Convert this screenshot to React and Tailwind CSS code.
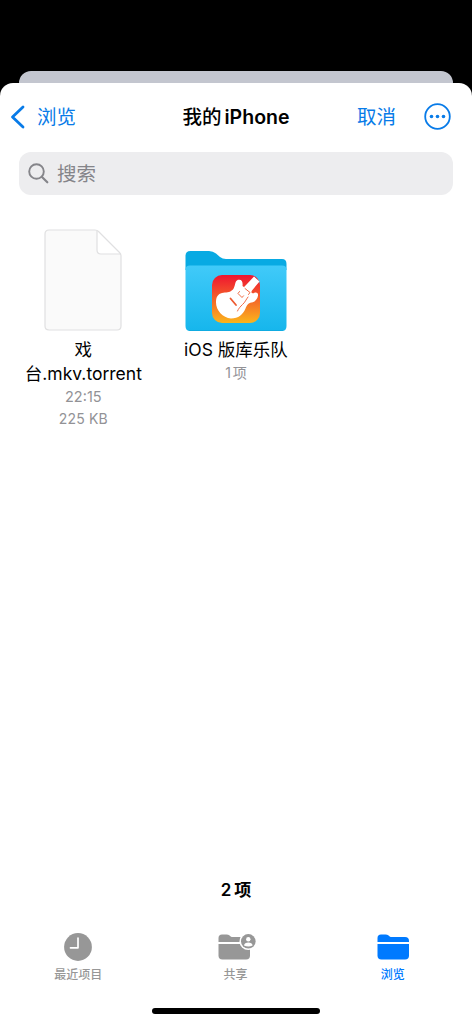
import React, { useState } from 'react';

const tabs = [
  { id: 'recents', label: '最近项目' },
  { id: 'shared', label: '共享' },
  { id: 'browse', label: '浏览' },
];

const FileIcon = () => (
  <svg width="78" height="102" viewBox="0 0 78 102" fill="none">
    <path
      d="M5 1H52.5L77 25.500V97Q77 101 73 101H5Q1 101 1 97V5Q1 1 5 1Z"
      fill="#fafafa"
    />
    <path d="M53 1L77 25H57Q53 25 53 21Z" fill="#fff" />
    <path
      d="M5 1H51Q53 1 54.500 2.500L75.500 23.500Q77 25 77 27V97Q77 101 73 101H5Q1 101 1 97V5Q1 1 5 1Z"
      stroke="#e0e0e1"
      strokeWidth="1.200"
    />
    <path d="M53 1.500V21Q53 25 57 25H76.500" stroke="#e0e0e1" strokeWidth="1.200" />
  </svg>
);

const GarageBandFolder = () => (
  <svg width="102" height="80" viewBox="0 0 102 80" fill="none">
    <defs>
      <linearGradient id="front" x1="0" y1="14" x2="0" y2="80" gradientUnits="userSpaceOnUse">
        <stop stopColor="#41caf9" />
        <stop offset="1" stopColor="#16b6ec" />
      </linearGradient>
      <linearGradient id="band" x1="0" y1="24" x2="0" y2="72" gradientUnits="userSpaceOnUse">
        <stop stopColor="#ef1430" />
        <stop offset="0.500" stopColor="#f4642a" />
        <stop offset="1" stopColor="#fbb51c" />
      </linearGradient>
    </defs>
    <path
      d="M0.500 5Q0.500 0 5.500 0H24Q28 0 31 2.500L35 6Q37.500 8 41 8H97Q101.500 8 101.500 13V19H0.500Z"
      fill="#08aae3"
    />
    <path
      d="M5 14.500H97Q101.500 14.500 101.500 18.500V75Q101.500 80 97 80H5Q0.500 80 0.500 75V18.500Q0.500 14.500 5 14.500Z"
      fill="url(#front)"
    />
    <path d="M4 79.500H98" stroke="#0ba4da" strokeWidth="0.600" />
    <rect x="27" y="24" width="48" height="48" rx="10" fill="url(#band)" />
    {/* guitar body */}
    <path
      d="M31 50.500C31 46 33 43 37 42C41 41.200 44.500 42 48 38.500C50.500 35.500 49.500 30 53 28.800C57 28 58 31 57.500 35L68 42.500C70.500 40.500 73.500 41.500 73 44.500C72.500 48 70 51 66.500 51.500C63 52 62 54 60.500 57.500C58 63.500 53.500 67.500 46 67.500C37.500 67 30.500 59 31 50.500Z"
      fill="#fff"
    />
    {/* neck and headstock */}
    <path d="M55 40L61.500 33.500L69 25.500L74.500 30.500L67 39.500L64 46L59 48Z" fill="#fff" />
    <g stroke="#ed5a30" strokeWidth="0.900" strokeLinecap="round" strokeLinejoin="round">
      <path d="M60 37.500L65 41.500L63.500 43.500" />
      <path d="M54.500 40.500L53 42.500L57 46.500L58.500 44.800" />
      <path d="M45.500 47.500L51 54" strokeWidth="1.800" />
      <path d="M63 46C61 48.500 60 51.500 57.500 53.500C55.500 55.500 53.500 57.500 52.500 60" />
    </g>
  </svg>
);

const ClockIcon = () => (
  <svg width="28" height="28" viewBox="0 0 28 28" fill="none" className="-ml-[1px]">
    <circle cx="14" cy="14" r="13.900" fill="currentColor" />
    <path d="M14 5V14.800H6.500" stroke="#fff" strokeWidth="1.700" strokeLinecap="round" strokeLinejoin="round" />
  </svg>
);

const FolderIcon = ({ shared }) => (
  <svg width="38" height="28" viewBox="0 0 38 28" fill="none" className={shared ? 'ml-[2px]' : 'ml-[6px]'}>
    <path
      d="M0.500 9V5Q0.500 1.500 4 1.500H8.500Q10.300 1.500 11.600 2.600L12.700 3.400Q13.500 4 15 4H28Q32 4 32 8V9Z"
      fill="currentColor"
    />
    <path d="M0.500 11H32V22.500Q32 26.500 28 26.500H4.500Q0.500 26.500 0.500 22.500Z" fill="currentColor" />
    {shared && (
      <>
        <circle cx="30.300" cy="8.300" r="8.800" fill="#fff" />
        <circle cx="30.300" cy="8.300" r="7.300" fill="currentColor" />
        <circle cx="30.300" cy="6.300" r="2.200" fill="#fff" />
        <path d="M26 12.500C26 8.500 34.600 8.500 34.600 12.500Q30.300 14.400 26 12.500Z" fill="#fff" />
      </>
    )}
  </svg>
);

const Header = () => (
  <header className="h-[69px] px-[21px] grid grid-cols-[1fr_auto_1fr] items-center text-[19.5px] leading-6 text-[#087be8]">
    <button className="-ml-[11px] -mt-[1px] flex items-center gap-[11px]">
      <svg width="16" height="24" viewBox="0 0 16 24" fill="none">
        <path d="M13 2L2.500 12L13 22" stroke="currentColor" strokeWidth="2.800" strokeLinecap="round" strokeLinejoin="round" />
      </svg>
      <span>浏览</span>
    </button>
    <h1 className="-mt-[2px] font-medium text-black">我的<span className="ml-[3px] font-semibold">iPhone</span></h1>
    <div className="-mt-[2px] flex items-center justify-end gap-7">
      <button>取消</button>
      <svg width="27" height="27" viewBox="0 0 27 27" fill="none">
        <circle cx="13.500" cy="13.500" r="12.300" stroke="currentColor" strokeWidth="1.800" />
        <g fill="currentColor">
          <circle cx="7.500" cy="13.500" r="1.800" />
          <circle cx="13.500" cy="13.500" r="1.800" />
          <circle cx="19.500" cy="13.500" r="1.800" />
        </g>
      </svg>
    </div>
  </header>
);

const App = () => {
  const [activeTab, setActiveTab] = useState('browse');

  return (
    <div className="h-[1024px] w-[472px] bg-black flex flex-col overflow-hidden font-[Inter,'Noto_Sans_CJK_SC',sans-serif]">
      {/* edge of the page behind the sheet */}
      <div className="mt-[71px] mx-[19px] h-3 shrink-0 rounded-t-[12px] bg-[#c3c6cf]"></div>

      <div className="flex-1 flex flex-col bg-white rounded-t-[13px]">
        <Header />

        <div className="mx-[19px] h-[43px] shrink-0 rounded-[12px] bg-[#ededef] flex items-center gap-2 pl-[9px] text-[#85858a]">
          <svg width="21" height="21" viewBox="0 0 21 21" fill="none">
            <circle cx="8.500" cy="8.500" r="7.300" stroke="currentColor" strokeWidth="1.900" />
            <path d="M14 14L19.300 19.300" stroke="currentColor" strokeWidth="2.200" strokeLinecap="round" />
          </svg>
          <span className="text-[19.5px] leading-6">搜索</span>
        </div>

        <main className="flex-1 px-[7px] pt-[34px] grid grid-cols-3 content-start text-center">
          <div className="flex flex-col items-center">
            <FileIcon />
            <p className="mt-[7px] text-[17.5px] leading-6 text-black">戏<br />台.mkv.torrent</p>
            <p className="text-[14.5px] leading-[22px] text-[#929296]">22:15</p>
            <p className="text-[14px] leading-[22px] tracking-[0.2px] text-[#929296]">225 KB</p>
          </div>
          <div className="flex flex-col items-center pt-[22px]">
            <GarageBandFolder />
            <p className="mt-[7px] text-[17.5px] leading-6 text-black">iOS 版库乐队</p>
            <p className="text-[14px] leading-[22px] text-[#929296]">1<span className="ml-[2px]">项</span></p>
          </div>
        </main>

        <p className="text-center text-[17px] leading-6 font-semibold text-black">2<span className="ml-[3px]">项</span></p>

        <nav className="mt-[31px] grid grid-cols-3">
          {tabs.map(tab => (
            <button
              key={tab.id}
              onClick={() => setActiveTab(tab.id)}
              className={`flex flex-col items-center text-[12px] leading-4 ${activeTab === tab.id ? 'text-[#007aff]' : 'text-[#979797]'}`}
            >
              {tab.id === 'recents' ? <ClockIcon /> : <FolderIcon shared={tab.id === 'shared'} />}
              <span className="mt-[6px] -ml-[1px] font-medium">{tab.label}</span>
            </button>
          ))}
        </nav>

        <div className="mt-[25px] mb-[10px] mx-auto h-[6px] w-[168px] shrink-0 rounded-full bg-black"></div>
      </div>
    </div>
  );
};

export default App;
